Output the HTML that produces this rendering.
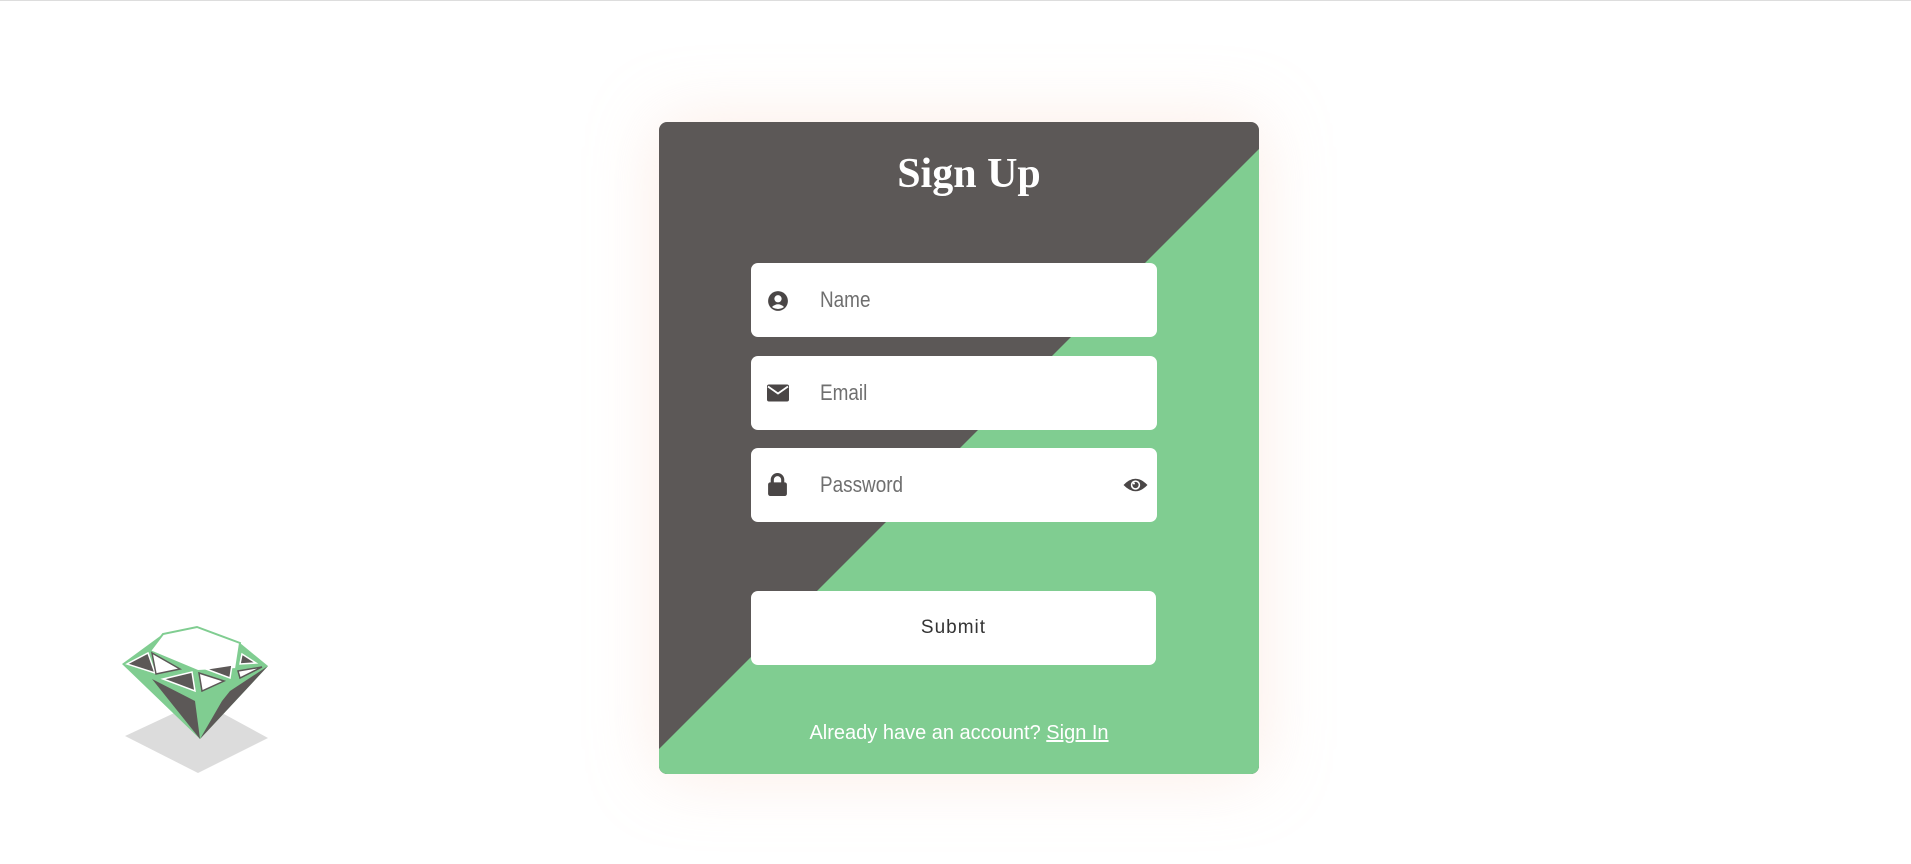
<!DOCTYPE html>
<html><head><meta charset="utf-8"><style>
*{margin:0;padding:0;box-sizing:border-box}
body{width:1911px;height:863px;background:#fff;position:relative;overflow:hidden;font-family:"Liberation Sans",sans-serif;border-top:1px solid #ddd}
.card{position:absolute;left:659px;top:121px;width:600px;height:652px;border-radius:8px;overflow:hidden;background:#5c5857;box-shadow:0 0 70px rgba(245,200,180,0.35)}
.card svg.bg{position:absolute;left:0;top:0}
h1{position:absolute;left:0;width:600px;top:28px;text-align:center;color:#fff;font-family:"Liberation Serif",serif;font-weight:bold;font-size:42px;padding-left:20px}
.inp{position:absolute;left:92px;width:406px;height:74px;background:#fff;border-radius:7px}
.inp .ph{position:absolute;left:69px;top:0;line-height:74px;font-family:"Liberation Sans Narrow","Liberation Sans",sans-serif;font-size:22px;color:#6f6f6f;transform:scaleX(0.86);transform-origin:left center}
.inp svg{position:absolute}
.btn{position:absolute;left:92px;top:469px;width:405px;height:74px;background:#fff;border-radius:7px;text-align:center;line-height:74px;font-size:19px;letter-spacing:1px;color:#333}
.foot{position:absolute;left:0;width:600px;top:600px;text-align:center;color:#fff;font-size:20px}
.foot u{text-decoration:underline}
</style></head><body>
<div class="card">
<svg class="bg" width="600" height="652"><polygon points="600,27 600,652 0,652 0,627" fill="#80cd91"/></svg>
<h1>Sign Up</h1>
<div class="inp" style="top:141px">
<svg style="left:16px;top:27px" width="22" height="22" viewBox="0 0 20 20"><circle cx="10" cy="10" r="9" fill="#4a4646"/><circle cx="10" cy="8" r="3.3" fill="#fff"/><path d="M4.5 15.5 Q10 10.5 15.5 15.5 Q10 19 4.5 15.5Z" fill="#fff"/></svg>
<div class="ph">Name</div></div>
<div class="inp" style="top:234px">
<svg style="left:16px;top:28px" width="22" height="18" viewBox="0 0 22 17"><rect x="0" y="0" width="22" height="17" rx="2" fill="#4a4646"/><path d="M1 2 L11 9 L21 2" stroke="#fff" stroke-width="1.8" fill="none"/></svg>
<div class="ph">Email</div></div>
<div class="inp" style="top:326px">
<svg style="left:17px;top:25px" width="19" height="23" viewBox="0 0 18 22"><path d="M4 10 V6.5 A5 5 0 0 1 14 6.5 V10" stroke="#4a4646" stroke-width="3" fill="none"/><rect x="0" y="9" width="18" height="13" rx="2" fill="#4a4646"/></svg>
<div class="ph">Password</div>
<svg style="left:372px;top:28px" width="25" height="18" viewBox="0 0 24 16"><path d="M0.5 8 Q12 -4 23.5 8 Q12 20 0.5 8Z" fill="#4a4646"/><circle cx="12" cy="8" r="4.5" fill="#fff"/><circle cx="12" cy="8" r="3" fill="#4a4646"/><circle cx="10.5" cy="6.5" r="1" fill="#fff"/></svg>
</div>
<div class="btn">Submit</div>
<div class="foot">Already have an account? <u>Sign In</u></div>
</div>
<svg style="position:absolute;left:0;top:0" width="400" height="863">
<polygon points="125,735 200,700 268,737 198,772" fill="#dcdcdc"/>
<polygon points="122,663 163,633 197,626 240,642 268,665 200,738" fill="#80cd91"/>
<polygon points="152,678 200,738 195,700" fill="#5c5857"/>
<polygon points="200,738 268,665 230,690 222,700" fill="#5c5857"/>
<polygon points="150,650 163,633 197,626 240,642 236,668 198,670" fill="#fff" stroke="#80cd91" stroke-width="2"/>
<polygon points="127,663 148,652 155,672" fill="#5c5857" stroke="#fff" stroke-width="1.5"/>
<polygon points="152,652 180,668 156,673" fill="#fff" stroke="#5c5857" stroke-width="1.5"/>
<polygon points="163,678 192,671 195,690" fill="#5c5857" stroke="#fff" stroke-width="1.5"/>
<polygon points="199,672 224,680 202,690" fill="#fff" stroke="#5c5857" stroke-width="1.5"/>
<polygon points="206,668 232,664 230,677" fill="#5c5857" stroke="#fff" stroke-width="1.5"/>
<polygon points="242,653 256,662 240,663" fill="#5c5857" stroke="#fff" stroke-width="1.5"/>
<polygon points="238,670 262,666 240,677" fill="#fff" stroke="#5c5857" stroke-width="1.5"/>
</svg>
</body></html>
